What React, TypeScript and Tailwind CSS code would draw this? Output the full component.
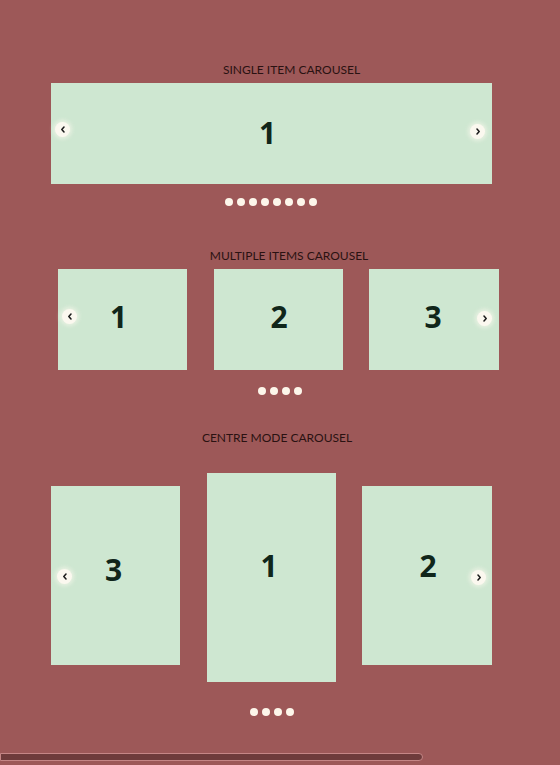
import React from "react";

const titleFont = { fontFamily: '"Lato", "Noto Sans", sans-serif' };
const numFont = { fontFamily: '"Open Sans", "Noto Sans", sans-serif' };

function Arrow({ dir, className }: { dir: "left" | "right"; className: string }) {
  return (
    <div
      className={`absolute flex h-[15px] w-[15px] items-center justify-center rounded-full bg-[#fbf8ef] shadow-[0_0_4px_2px_rgba(251,248,239,0.6)] ${className}`}
    >
      <svg width="6" height="7" viewBox="0 0 6 7" fill="none">
        {dir === "left" ? (
          <path d="M4 1 L1.8 3.5 L4 6" stroke="#1a1a1a" strokeWidth="1.5" strokeLinecap="round" strokeLinejoin="round" />
        ) : (
          <path d="M2 1 L4.2 3.5 L2 6" stroke="#1a1a1a" strokeWidth="1.5" strokeLinecap="round" strokeLinejoin="round" />
        )}
      </svg>
    </div>
  );
}

function Dots({ count }: { count: number }) {
  return (
    <div className="flex items-center justify-center gap-[4px]">
      {Array.from({ length: count }).map((_, i) => (
        <span key={i} className="block h-[8px] w-[8px] rounded-full bg-[#fdf6ea]" />
      ))}
    </div>
  );
}

function Slide({ n, className, numClass = "" }: { n: number; className: string; numClass?: string }) {
  return (
    <div className={`flex items-center justify-center bg-[#cee7d1] ${className}`}>
      <span
        style={numFont}
        className={`text-[30px] font-bold leading-none text-[#10261a] ${numClass}`}
      >
        {n}
      </span>
    </div>
  );
}

function Title({ children, className }: { children: React.ReactNode; className: string }) {
  return (
    <div
      style={titleFont}
      className={`h-4 text-center text-[12px] leading-4 text-[#2a1212] ${className}`}
    >
      {children}
    </div>
  );
}

export default function App() {
  return (
    <div className="flex h-[765px] w-[560px] flex-col overflow-hidden bg-[#9d5858]">
      {/* single item */}
      <div className="ml-[51px] w-[441px] pt-[62px]">
        <Title className="pl-[40px]">SINGLE ITEM CAROUSEL</Title>
        <div className="relative mt-[5px]">
          <Slide n={1} className="h-[101px] w-full" numClass="-translate-x-[4px] translate-y-[-1px]" />
          <Arrow dir="left" className="left-[4px] top-[39px]" />
          <Arrow dir="right" className="right-[7px] top-[41px]" />
        </div>
        <div className="mt-[14px] pr-[2px]">
          <Dots count={8} />
        </div>
      </div>

      {/* multiple items */}
      <div className="ml-[58px] mt-[42px] w-[441px]">
        <Title className="pl-[21px]">MULTIPLE ITEMS CAROUSEL</Title>
        <div className="relative mt-[5px] flex justify-between">
          <Slide n={1} className="h-[101px] w-[129px]" numClass="-translate-x-[4px] -translate-y-[3px]" />
          <Slide n={2} className="h-[101px] w-[129px]" numClass="translate-x-[1px] -translate-y-[3px]" />
          <Slide n={3} className="h-[101px] w-[130px]" numClass="-translate-x-[1px] -translate-y-[3px]" />
          <Arrow dir="left" className="left-[4px] top-[40px]" />
          <Arrow dir="right" className="right-[7px] top-[42px]" />
        </div>
        <div className="mt-[17px] pl-[2px]">
          <Dots count={4} />
        </div>
      </div>

      {/* centre mode */}
      <div className="ml-[51px] mt-[35px] w-[441px]">
        <Title className="pl-[11px]">CENTRE MODE CAROUSEL</Title>
        <div className="relative mt-[27px] flex items-start justify-between">
          <Slide n={3} className="mt-[13px] h-[179px] w-[129px]" numClass="-translate-x-[2px] -translate-y-[6px]" />
          <Slide n={1} className="h-[209px] w-[129px]" numClass="-translate-x-[2px] -translate-y-[12px]" />
          <Slide n={2} className="mt-[13px] h-[179px] w-[130px]" numClass="translate-x-[1px] -translate-y-[10px]" />
          <Arrow dir="left" className="left-[6px] top-[96px]" />
          <Arrow dir="right" className="right-[6px] top-[97px]" />
        </div>
        <div className="mt-[26px]">
          <Dots count={4} />
        </div>
      </div>

      {/* horizontal scrollbar */}
      <div className="mt-[37px] h-[8px] w-[423px] rounded-r-full border border-[#c58686] bg-[#6e3b3b]" />
    </div>
  );
}
